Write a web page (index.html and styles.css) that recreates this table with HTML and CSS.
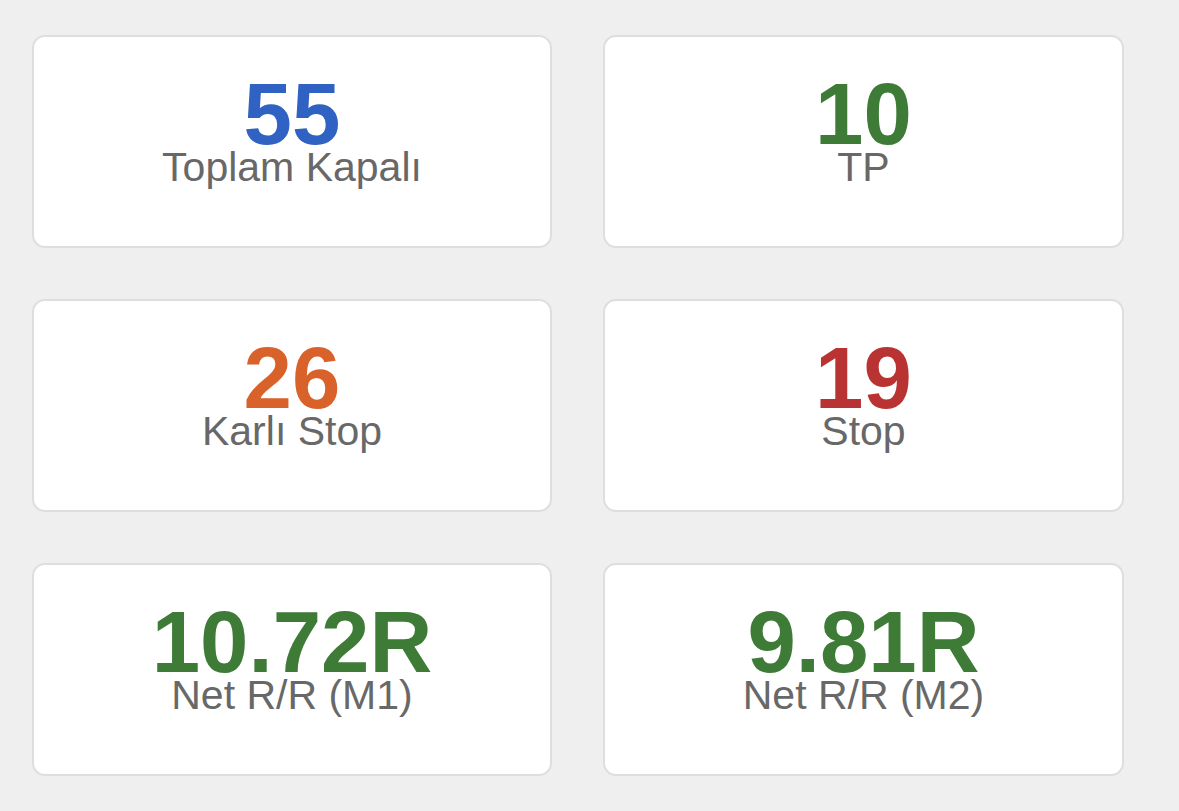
FILE: index.html
```html
<!DOCTYPE html>
<html lang="tr">
<head>
<meta charset="utf-8">
<title>İstatistikler</title>
<link rel="stylesheet" href="styles.css">
</head>
<body>
<main class="stats">
  <div class="card">
    <div class="value value-blue">55</div>
    <div class="label">Toplam Kapalı</div>
  </div>
  <div class="card">
    <div class="value value-green">10</div>
    <div class="label">TP</div>
  </div>
  <div class="card">
    <div class="value value-orange">26</div>
    <div class="label">Karlı Stop</div>
  </div>
  <div class="card">
    <div class="value value-red">19</div>
    <div class="label">Stop</div>
  </div>
  <div class="card">
    <div class="value value-green">10.72R</div>
    <div class="label">Net R/R (M1)</div>
  </div>
  <div class="card">
    <div class="value value-green">9.81R</div>
    <div class="label">Net R/R (M2)</div>
  </div>
</main>
</body>
</html>
```
FILE: styles.css
```css
html, body {
  margin: 0;
  padding: 0;
  background: #efefef;
  font-family: "Liberation Sans", Arial, sans-serif;
}

.stats {
  display: grid;
  grid-template-columns: 520px 521px;
  grid-auto-rows: 213px;
  column-gap: 51px;
  row-gap: 51px;
  padding: 35px 0 0 32px;
}

.card {
  box-sizing: border-box;
  background: #ffffff;
  border: 2px solid #dedede;
  border-radius: 13px;
  display: flex;
  flex-direction: column;
  align-items: center;
  justify-content: center;
  padding-bottom: 14px;
}

.value {
  font-size: 87px;
  font-weight: 700;
  line-height: 66px;
}

.label {
  font-size: 41px;
  line-height: 41px;
  color: #686868;
}

.value-blue { color: #2f62c2; }
.value-green { color: #3d7b37; }
.value-orange { color: #d8622a; }
.value-red { color: #b93333; }
```
